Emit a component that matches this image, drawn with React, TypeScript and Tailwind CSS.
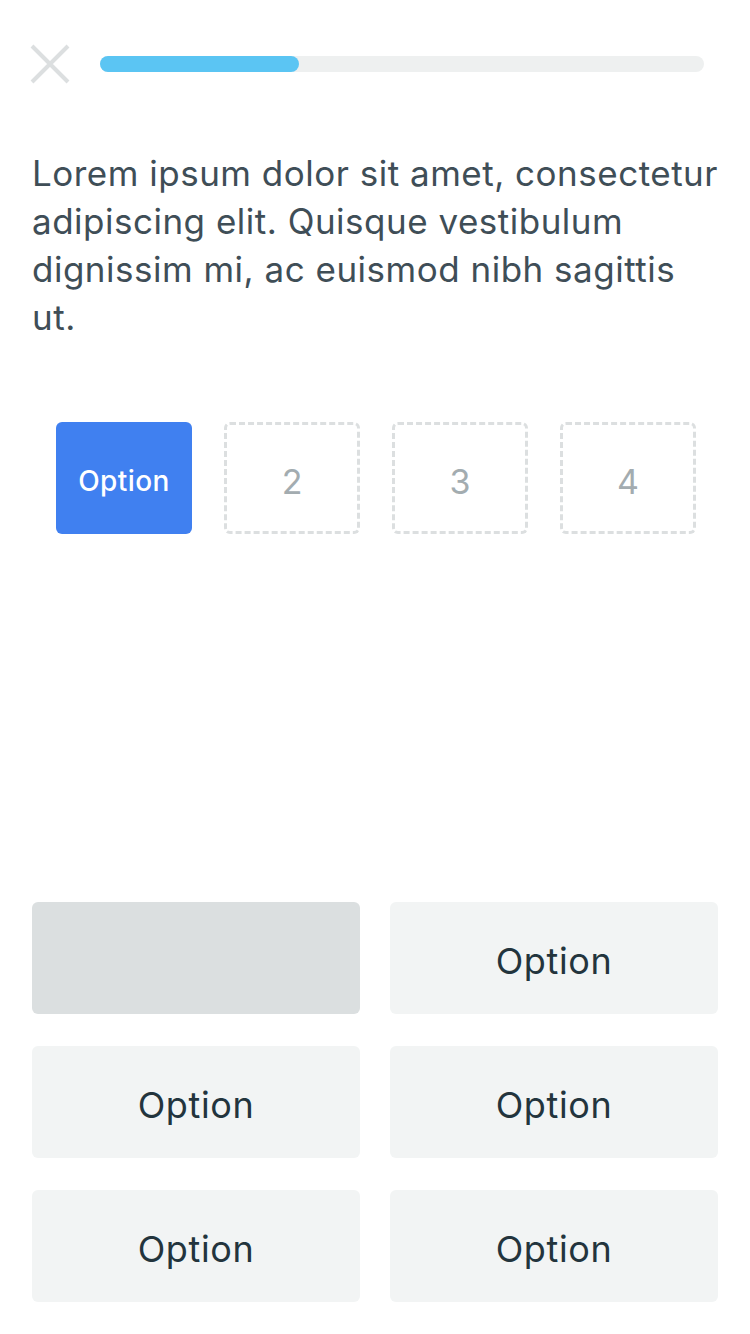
import { useState } from 'react';

const font = { fontFamily: 'Inter, "Noto Sans", sans-serif' };

export default function App() {
  const [picked, setPicked] = useState(0);
  const scale = ['Option', '2', '3', '4'];
  const options = ['', 'Option', 'Option', 'Option', 'Option', 'Option'];

  return (
    <div style={font} className="w-[750px] h-[1334px] bg-white flex flex-col px-8 pb-8">
      {/* Top bar: close + progress */}
      <div className="flex items-center h-[128px]">
        <button className="w-[40px] h-[40px] -ml-[2px] flex items-center justify-center">
          <svg width="40" height="40" viewBox="0 0 40 40">
            <path d="M2 2 L38 38 M38 2 L2 38" stroke="#dcdfe0" strokeWidth="4" />
          </svg>
        </button>
        <div className="ml-[30px] mr-[14px] flex-1 h-[16px] rounded-full bg-[#eef0f0]">
          <div className="h-full w-[199px] rounded-full bg-[#5bc5f3]" />
        </div>
      </div>

      {/* Question */}
      <p className="mt-[21px] text-[35px] leading-[48px] tracking-[0.5px] text-[#3f4e57]">
        Lorem ipsum dolor sit amet, consectetur
        <br />
        adipiscing elit. Quisque vestibulum
        <br />
        dignissim mi, ac euismod nibh sagittis
        <br />
        ut.
      </p>

      {/* Scale */}
      <div className="flex gap-8 px-6 mt-[81px]">
        {scale.map((s, i) =>
          i === picked ? (
            <button
              key={i}
              onClick={() => setPicked(i)}
              className="shrink-0 w-[136px] h-[112px] pt-[6px] rounded-md bg-[#4080f0] text-white text-[28px] tracking-[0.4px] font-medium flex items-center justify-center"
            >
              {s}
            </button>
          ) : (
            <button
              key={i}
              onClick={() => setPicked(i)}
              className="shrink-0 w-[136px] h-[112px] pt-[6px] rounded-md border-[3px] border-dashed border-[#dcdfe0] text-[#a3acb0] text-[34px] flex items-center justify-center"
            >
              {s}
            </button>
          )
        )}
      </div>

      <div className="flex-1" />

      {/* Answer grid */}
      <div className="grid grid-cols-2 gap-x-[30px] gap-y-8">
        {options.map((o, i) => (
          <button
            key={i}
            className={`h-[112px] pt-[5px] rounded-md text-[36px] tracking-[0.6px] text-[#23343d] flex items-center justify-center ${
              i === 0 ? 'bg-[#dbdfe0]' : 'bg-[#f2f4f4]'
            }`}
          >
            {o}
          </button>
        ))}
      </div>
    </div>
  );
}
